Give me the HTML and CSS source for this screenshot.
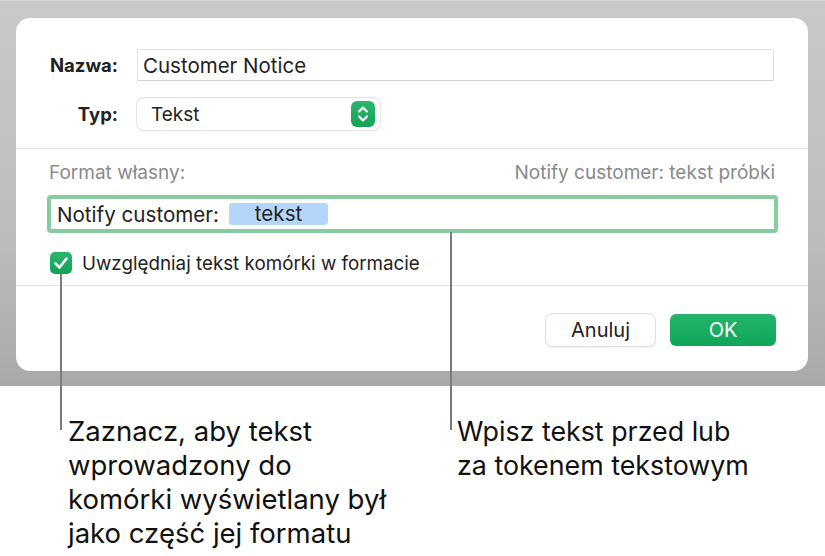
FILE: index.html
```html
<!DOCTYPE html>
<html lang="pl">
<head>
<meta charset="utf-8">
<link rel="stylesheet" href="styles.css">
</head>
<body>
<div class="page">
  <div class="stage">
    <div class="dialog">
      <div class="sec sec-top">
        <div class="row">
          <label class="lbl">Nazwa:</label>
          <div class="textfield">Customer Notice</div>
        </div>
        <div class="row">
          <label class="lbl">Typ:</label>
          <div class="select">
            <span class="sel-text">Tekst</span>
            <span class="stepper">
              <svg width="24" height="26" viewBox="0 0 24 26"><path d="M8 10.5 L12 6.5 L16 10.5" fill="none" stroke="#fff" stroke-width="2.2" stroke-linecap="round" stroke-linejoin="round"/><path d="M8 15.5 L12 19.5 L16 15.5" fill="none" stroke="#fff" stroke-width="2.2" stroke-linecap="round" stroke-linejoin="round"/></svg>
            </span>
          </div>
        </div>
      </div>
      <div class="sec sec-mid">
        <div class="fmt-head">
          <span>Format własny:</span>
          <span>Notify customer: tekst próbki</span>
        </div>
        <div class="fmt-field">
          <span class="fmt-text">Notify customer:</span>
          <span class="token">tekst</span>
        </div>
        <div class="check-row">
          <span class="checkbox">
            <svg width="22" height="22" viewBox="0 0 22 22"><path d="M5.5 11.5 L9.5 15.5 L16.5 6.5" fill="none" stroke="#fff" stroke-width="2.6" stroke-linecap="round" stroke-linejoin="round"/></svg>
          </span>
          <span class="check-lbl">Uwzględniaj tekst komórki w formacie</span>
        </div>
      </div>
      <div class="sec sec-btn">
        <button class="btn btn-cancel">Anuluj</button>
        <button class="btn btn-ok">OK</button>
      </div>
    </div>
  </div>
  <div class="callouts">
    <p class="callout callout-left">Zaznacz, aby tekst<br>wprowadzony do<br>komórki wyświetlany był<br>jako część jej formatu</p>
    <p class="callout callout-right">Wpisz tekst przed lub<br>za tokenem tekstowym</p>
  </div>
  <div class="leader leader-left"></div>
  <div class="leader leader-right"></div>
</div>
</body>
</html>
```

FILE: styles.css
```css
* { box-sizing: border-box; }
html, body { margin: 0; padding: 0; background: #fff; }
body {
  font-family: "Inter", "Liberation Sans", sans-serif;
  color: #1d1d1d;
  width: 825px;
  height: 556px;
  overflow: hidden;
}
.page { position: relative; width: 825px; height: 556px; }
.stage {
  height: 386px;
  padding: 17px 17px 16px 16px;
  background: linear-gradient(180deg, #c9c9c9 0%, #bdbdbd 60%, #a9a9a9 100%);
  border-top: 1px solid #d4d4d4;
}
.dialog {
  background: #fff;
  border-radius: 14px;
  height: 353px;
  display: flex;
  flex-direction: column;
}
.sec { border-bottom: 1px solid #e4e4e4; }
.sec:last-child { border-bottom: none; }
.sec-top { padding: 31px 34px 18px 0; display: flex; flex-direction: column; gap: 17px; }
.row { display: flex; align-items: center; height: 32px; }
.lbl {
  width: 102px;
  text-align: right;
  font-weight: 700;
  font-size: 18.5px;
  margin-right: 19px;
  color: #222;
}
.textfield {
  flex: 1;
  height: 32px;
  border: 1px solid #e2e2e2;
  border-bottom-color: #d2d2d2;
  padding: 0 5px;
  font-size: 20.5px;
  line-height: 31px;
  color: #222;
}
.select {
  width: 243px;
  height: 32px;
  border-radius: 7px;
  background: #fff;
  box-shadow: 0 0 0 1px #e3e3e3, 0 1px 2px rgba(0,0,0,0.12);
  display: flex;
  align-items: center;
  justify-content: space-between;
  padding: 0 5px 0 14px;
}
.sel-text { font-size: 19px; color: #222; }
.stepper {
  width: 24px; height: 26px;
  border-radius: 6px;
  background: linear-gradient(180deg, #2bb56b, #14a356);
  display: flex;
}
.sec-mid { padding: 12px 30px 11px 31px; }
.fmt-head {
  display: flex;
  justify-content: space-between;
  font-size: 19px;
  color: #8a8a8a;
  height: 24px;
  line-height: 24px;
  padding: 0 3px 0 2px;
}
.fmt-field {
  margin-top: 10px;
  height: 38px;
  border: 4px solid #86cc9f;
  border-radius: 4px;
  display: flex;
  align-items: center;
  padding: 0 6px;
  gap: 10px;
  font-size: 20.6px;
}
.fmt-text { color: #222; }
.token {
  background: #b5d6fb;
  border-radius: 3px;
  width: 99px;
  height: 22px;
  line-height: 22px;
  text-align: center;
  color: #222;
}
.check-row { margin-top: 19px; display: flex; align-items: center; height: 22px; gap: 10px; padding-left: 3px; }
.checkbox {
  width: 22px; height: 22px;
  border-radius: 5px;
  background: linear-gradient(180deg, #2bb56b, #12a154);
  display: flex;
}
.check-lbl { font-size: 18.8px; color: #222; }
.sec-btn { flex: 1; display: flex; justify-content: flex-end; align-items: flex-start; padding: 28px 32px 0 0; gap: 15px; }
.btn {
  height: 32px;
  border-radius: 6px;
  font-family: inherit;
  font-size: 20px;
  padding: 0;
}
.btn-cancel {
  width: 109px;
  background: #fff;
  color: #222;
  border: none;
  box-shadow: 0 0 0 1px #e0e0e0, 0 1px 2px rgba(0,0,0,0.15);
}
.btn-ok {
  width: 106px;
  border: none;
  color: #fff;
  background: linear-gradient(180deg, #25b56c, #0ea658);
}
.callouts { position: relative; height: 170px; }
.callout {
  position: absolute;
  margin: 0;
  font-size: 27.5px;
  line-height: 34px;
  color: #111;
}
.callout-left { left: 68px; top: 28px; }
.callout-right { left: 457px; top: 28px; font-size: 26.8px; }
.leader { position: absolute; width: 2px; background: #7a7a7a; }
.leader-left { left: 60px; top: 273px; height: 157px; }
.leader-right { left: 450px; top: 232px; height: 198px; }
```
